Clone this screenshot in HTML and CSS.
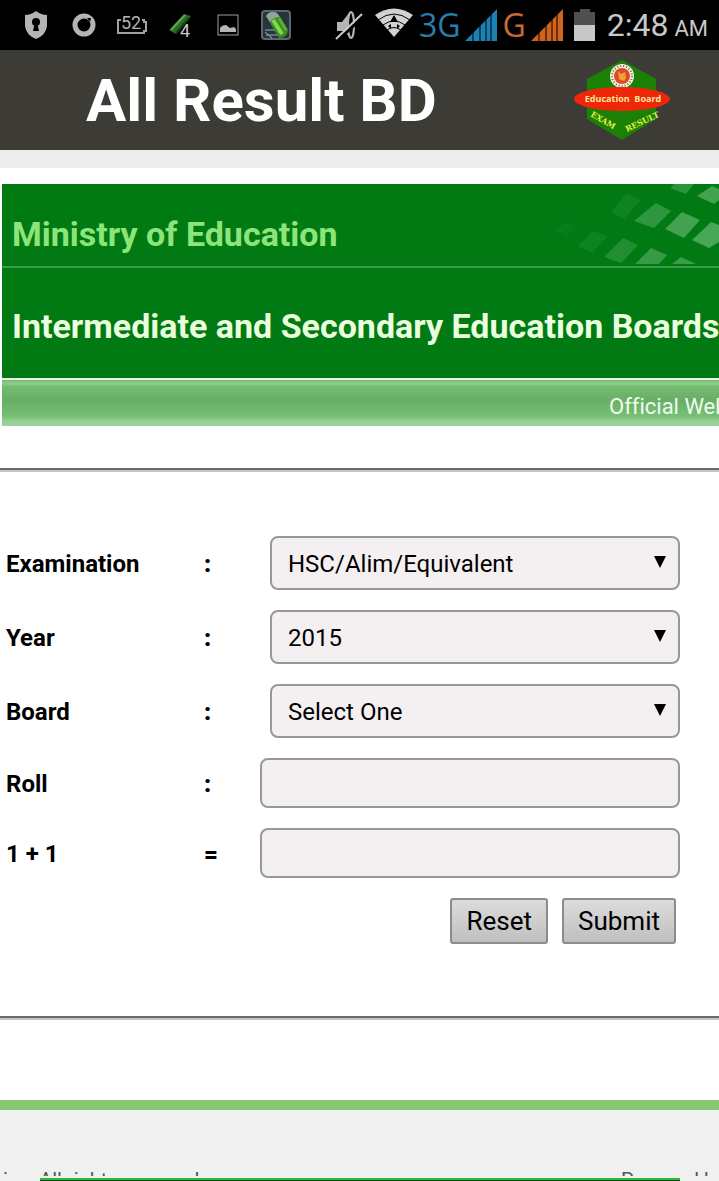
FILE: index.html
```html
<!DOCTYPE html>
<html lang="en">
<head>
    <meta charset="UTF-8">
    <meta name="viewport" content="width=device-width, initial-scale=1.0">
    <title>All Result BD</title>
    <link rel="stylesheet" href="styles.css">
</head>
<body>
    <!-- Status bar -->
    <div class="status-bar">
        <div class="notifications">
            <svg width="24" height="30" viewBox="0 0 24 30">
                <path d="M12 1 Q17 5 23 5 V16 Q22 25 12 29 Q2 25 1 16 V5 Q7 5 12 1Z" fill="#b4b4b4"/>
                <circle cx="12" cy="12" r="4" fill="#000"/>
                <path d="M11 12 H13 L15 21 H9Z" fill="#000"/>
            </svg>
            <svg width="24" height="30" viewBox="0 0 24 30">
                <circle cx="12" cy="15" r="9" fill="none" stroke="#b4b4b4" stroke-width="5"/>
                <path d="M15 8 L19 8 L18 12Z" fill="#000"/>
            </svg>
            <svg width="30" height="30" viewBox="0 0 30 30">
                <path d="M4 10 H1 V23 H27 V21 H29 V12 H27 V10 H25" fill="none" stroke="#a0a0a0" stroke-width="2"/>
                <text x="14" y="19" text-anchor="middle" class="battery-text">52</text>
            </svg>
            <svg width="26" height="30" viewBox="0 0 26 30">
                <path d="M2 20 L17 4 L24 6 L9 24Z" fill="#2c6b25"/>
                <path d="M4 20 L18 5" stroke="#5aa84d" stroke-width="2"/>
                <path d="M9 23 L22 8" stroke="#174214" stroke-width="2"/>
                <text x="13" y="27" class="badge-text">4</text>
            </svg>
            <svg width="22" height="30" viewBox="0 0 22 30">
                <rect x="1" y="5" width="20" height="20" fill="none" stroke="#a0a0a0" stroke-width="1"/>
                <path d="M3 22 V18 Q5 15 9 15 L13 18 L17 17 L19 19 V22Z" fill="#b4b4b4"/>
            </svg>
            <svg width="30" height="30" viewBox="0 0 30 30">
                <rect width="30" height="30" rx="4" fill="#5b6871"/>
                <rect x="2" y="2" width="26" height="26" rx="2" fill="#26343e"/>
                <path d="M4 20 H15 M5 25 H20 M4 22 L11 28" stroke="#a2adb2" stroke-width="1"/>
                <path d="M5 6 Q9 0 16 3 L27 20 Q26 28 18 28Z" fill="#3b8e25"/>
                <path d="M5 6 Q9 0 16 3 L19 7 Q12 7 9 12Z" fill="#95a39d"/>
                <path d="M12 10 L21 24" stroke="#84d64b" stroke-width="4"/>
                <path d="M18 8 L25 20" stroke="#5eae35" stroke-width="3"/>
            </svg>
        </div>
        <div class="system">
            <svg width="28" height="32" viewBox="0 0 28 32">
                <path d="M2 13 H7 L14 4 V27 L8 22 H2Z" fill="#b4b4b4"/>
                <ellipse cx="16" cy="16" rx="3" ry="13" fill="#000" stroke="#b4b4b4" stroke-width="2"/>
                <path d="M2 32 L29 7" stroke="#000" stroke-width="3"/>
                <path d="M1 30 L27 5" stroke="#c8c8c8" stroke-width="2"/>
            </svg>
            <svg width="40" height="30" viewBox="0 0 40 30" class="wifi">
                <path d="M20 29 L1 7 Q20 -6 39 7Z" fill="#d2d2d2"/>
                <path d="M4 12 Q20 0 36 12 M9 17 Q20 9 31 17 M13 22 Q20 17 27 22" fill="none" stroke="#000" stroke-width="1"/>
                <path d="M20 7 L24 14 H16Z M14 18 L17 16 V21Z M26 18 L23 16 V21Z" fill="#000"/>
            </svg>
            <span class="network blue">3G</span>
            <svg width="32" height="32" viewBox="0 0 32 32">
                <path d="M0 32 L32 0 V32Z" fill="#1b81b4"/>
                <path d="M8 20 V32 M15 14 V32 M21 8 V32 M26 3 V32" stroke="#000" stroke-width="1"/>
            </svg>
            <span class="network orange">G</span>
            <svg width="32" height="32" viewBox="0 0 32 32">
                <path d="M0 32 L32 0 V32Z" fill="#d2631c"/>
                <path d="M8 20 V32 M15 14 V32 M21 8 V32 M26 3 V32" stroke="#000" stroke-width="1"/>
            </svg>
            <svg width="22" height="32" viewBox="0 0 22 32" class="battery">
                <path d="M0 3 H6 V0 H16 V3 H21 V16 H0Z" fill="#505050"/>
                <rect y="16" width="21" height="16" fill="#c8c8c8"/>
            </svg>
            <span class="clock">2:48<small>AM</small></span>
        </div>
    </div>

    <!-- App title -->
    <header class="header">
        <h1>All Result BD</h1>
        <svg width="98" height="82" viewBox="0 0 98 82" role="img" aria-label="Education Board exam result">
            <path d="M49 1 L83 20 V60 L49 81 L14 60 V20Z" fill="#1b8106"/>
            <circle cx="49" cy="17" r="12" fill="#f4f0dc"/>
            <circle cx="49" cy="17" r="10" fill="none" stroke="#5b7146" stroke-width="2" stroke-dasharray="1 2"/>
            <circle cx="49" cy="17" r="8" fill="#dd4b22"/>
            <path d="M45 12 L48 15 L52 13 L53 19 L51 22 L46 20Z" fill="#f0a03a"/>
            <ellipse cx="49" cy="40" rx="48" ry="12" fill="#f02609"/>
            <text x="50" y="43" text-anchor="middle" class="logo-name">Education&#160; Board</text>
            <path id="leftEdge" d="M17 57 L47 74" fill="none"/>
            <path id="rightEdge" d="M54 73 L88 57" fill="none"/>
            <text class="logo-text"><textPath href="#leftEdge">EXAM</textPath></text>
            <text class="logo-text"><textPath href="#rightEdge">RESULT</textPath></text>
        </svg>
    </header>

    <main class="page">
        <div class="banner">
            <div class="ministry">
                <h2>Ministry of Education</h2>
                <svg width="166" height="82" viewBox="0 0 166 82" aria-hidden="true">
                    <g fill="#48a657">
                        <path d="M121 0 H141 L133 10 L117 4Z" opacity=".6"/>
                        <path d="M159 2 L166 5 V16 L161 20 L144 12Z" opacity=".9"/>
                        <path d="M103 19 L118 27 L101 44 L81 37Z" opacity=".65"/>
                        <path d="M129 28 L147 36 L131 54 L112 45Z" opacity=".9"/>
                        <path d="M158 38 L166 41 V58 L156 64 L139 56Z"/>
                        <path d="M98 64 L114 71 L106 80 H82Z" opacity=".75"/>
                        <path d="M128 73 L143 80 H119Z" opacity=".8"/>
                        <path d="M70 54 L85 61 L68 79 L51 73Z" opacity=".45"/>
                        <path d="M73 10 L88 16 L71 35 L58 28Z" opacity=".2"/>
                        <path d="M40 47 L55 52 L39 69 L25 62Z" opacity=".2"/>
                        <path d="M13 38 L23 42 L14 53 L3 47Z" opacity=".1"/>
                    </g>
                </svg>
            </div>
            <h2 class="boards">Intermediate and Secondary Education Boards</h2>
            <div class="official"><span>Official Website</span></div>
        </div>

        <form class="result-form">
            <label for="exam">Examination</label><b>:</b>
            <div class="select">
                <select id="exam"><option>HSC/Alim/Equivalent</option></select>
            </div>
            <label for="year">Year</label><b>:</b>
            <div class="select">
                <select id="year"><option>2015</option></select>
            </div>
            <label for="board">Board</label><b>:</b>
            <div class="select">
                <select id="board"><option>Select One</option></select>
            </div>
            <label for="roll">Roll</label><b>:</b>
            <input type="text" id="roll">
            <label for="captcha">1 + 1</label><b>=</b>
            <input type="text" id="captcha">
            <div class="buttons">
                <button type="reset">Reset</button>
                <button type="submit">Submit</button>
            </div>
        </form>

        <footer class="footer">
            <span>ion, All rights reserved</span>
            <span class="powered">Powered by</span>
        </footer>
    </main>

    <div class="ad-bar"><div class="ad"></div></div>
</body>
</html>
```
FILE: styles.css
```css
* {
    box-sizing: border-box;
}
body {
    font-family: Roboto, sans-serif;
    font-variant-ligatures: none;
    margin: 0;
    height: 100vh;
    display: flex;
    flex-direction: column;
    overflow: hidden;
    background: white;
    color: black;
}
h1, h2 {
    margin: 0;
}
svg {
    flex: none;
}

/* Status bar */
.status-bar {
    display: flex;
    flex: none;
    align-items: center;
    justify-content: space-between;
    height: 50px;
    padding: 0 11px 0 12px;
    background: black;
    white-space: nowrap;
}
.notifications {
    display: grid;
    grid-template-columns: repeat(6, 48px);
    justify-items: center;
}
.battery-text {
    font-size: 18px;
    fill: #b4b4b4;
}
.badge-text {
    font-size: 18px;
    fill: #c8c8c8;
}
.system {
    display: flex;
    align-items: center;
    gap: 5px;
}
.wifi {
    margin: 0 0 4px 6px;
}
.battery {
    margin: 0 6px;
}
.network {
    font: 32px "Open Sans", sans-serif;
    line-height: 48px;
}
.blue {
    color: #2a7dab;
}
.orange {
    color: #c96a3c;
}
.clock {
    padding-top: 4px;
    font-size: 32px;
    line-height: 50px;
    color: #c8c8c8;
}
.clock small {
    margin-left: 6px;
    font-size: 22px;
}

/* App title */
.header {
    display: flex;
    flex: none;
    align-items: center;
    justify-content: space-between;
    height: 100px;
    padding: 0 48px 0 86px;
    background: #3d3b36;
    color: white;
}
.header h1 {
    font-size: 60px;
    line-height: 70px;
    padding-top: 2px;
}
.logo-name {
    font: bold 9px "Open Sans", sans-serif;
    fill: #fbe6a0;
}
.logo-text {
    font: bold 8px "DejaVu Serif", serif;
    fill: #e4f04a;
}

/* Banner */
.page {
    flex: 1;
    min-height: 0;
    overflow: hidden;
    border-top: 18px solid #ececec;
    padding-top: 16px;
}
.banner {
    margin-left: 2px;
    background: #027a14;
    overflow: hidden;
    white-space: nowrap;
}
.banner h2 {
    font-size: 34px;
    line-height: 40px;
    padding-left: 10px;
}
.ministry {
    display: flex;
    justify-content: space-between;
    height: 84px;
    border-bottom: 2px solid #3a9d48;
    color: #8de57a;
}
.ministry h2 {
    padding-top: 30px;
}
.banner .boards {
    padding-top: 38px;
    height: 110px;
    color: #eaffdd;
}
.official {
    display: flex;
    justify-content: flex-end;
    height: 48px;
    border-top: 2px solid #e6f9e2;
    background: linear-gradient(#7fb97c, #8fd08c 4px, #75bd72 6px, #69ae67 20px, #77bf75 36px, #98d196 42px, #a5cca3);
    color: #effbec;
    font-size: 22px;
    line-height: 54px;
}
.official span {
    width: 110px;
}

/* Form */
.result-form {
    display: grid;
    grid-template-columns: 198px 56px 1fr;
    row-gap: 20px;
    align-items: center;
    margin-top: 42px;
    padding: 66px 39px 72px 6px;
    border-top: 2px solid #6b6b6b;
    border-bottom: 2px solid #6b6b6b;
    box-shadow: inset 0 2px #c4c4c4, 0 2px #c4c4c4;
    font-size: 24px;
    line-height: 30px;
    font-weight: bold;
}
label, b {
    padding-top: 2px;
}
.select {
    position: relative;
    margin-left: 10px;
}
.select::after {
    content: "";
    position: absolute;
    right: 14px;
    top: 20px;
    width: 12px;
    height: 12px;
    background: black;
    clip-path: polygon(0 0, 100% 0, 50% 100%);
    pointer-events: none;
}
select, input {
    display: block;
    width: 100%;
    height: 50px;
    margin: 0;
    padding: 2px 16px 0;
    border: 2px solid #989898;
    border-radius: 8px;
    background: #f4eff1;
    color: black;
    font: 24px Roboto, sans-serif;
}
select {
    height: 54px;
    appearance: none;
}
.buttons {
    grid-column: 1 / -1;
    display: flex;
    justify-content: flex-end;
    gap: 14px;
    padding-right: 4px;
}
button {
    height: 46px;
    padding: 0 14px;
    border: 2px solid #8c8c8c;
    border-radius: 3px;
    background: linear-gradient(#dcdcdc, #bfbfbf);
    color: black;
    font: 26px Roboto, sans-serif;
}

/* Footer */
.footer {
    display: flex;
    justify-content: space-between;
    margin-top: 82px;
    padding: 58px 0 40px 3px;
    border-top: 10px solid #88c872;
    background: #f0f0f0;
    color: #555;
    font-size: 20px;
    line-height: 24px;
    white-space: nowrap;
}
.powered {
    width: 98px;
}
.ad-bar {
    flex: none;
    padding: 2px 39px 0 40px;
    background: #f0f0f0;
}
.ad {
    height: 3px;
    border-top: 2px solid #2db83a;
    background: #064f0c;
}
```
